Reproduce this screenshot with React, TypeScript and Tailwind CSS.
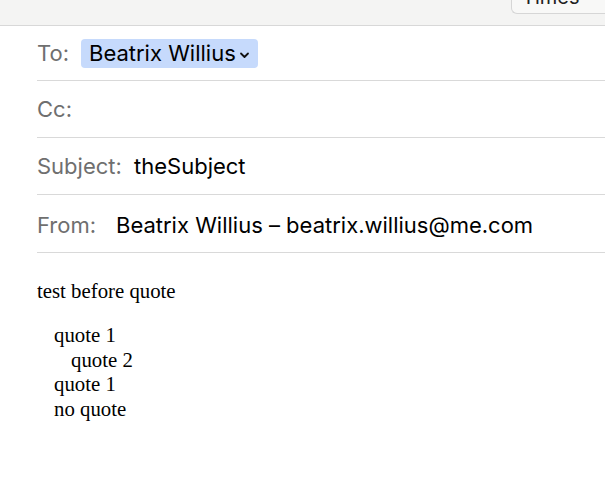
import React from 'react'

const ui = { fontFamily: 'Inter, "Liberation Sans", sans-serif' }
const serif = { fontFamily: '"Liberation Serif", "Times New Roman", serif' }

const Row = ({ label, children, h, labelW, pt }: { label: string; children?: React.ReactNode; h: string; labelW: string; pt: string }) => (
  <div className={`ml-[37px] flex items-center border-b border-[#d9d9d9] ${h} ${pt}`}>
    <span className={`text-[22px] text-[#6f6f6f] ${labelW}`}>{label}</span>
    {children}
  </div>
)

const App = () => {
  return (
    <div className="w-[605px] h-[500px] bg-white overflow-hidden" style={ui}>
      <div className="h-[26px] bg-[#f4f4f3] border-b border-[#d8d8d8] flex justify-end">
        <div className="w-[94px] h-[15px] -mt-px bg-[#f8f8f7] border border-[#d6d6d6] border-r-0 rounded-bl-md overflow-hidden">
          <div className="pl-[10px] -mt-[15px] text-[20px] leading-[24px] text-[#222]">Times</div>
        </div>
      </div>

      <Row label="To:" h="h-[55px]" labelW="w-[44px]" pt="pt-0">
        <div className="flex items-center h-[29px] px-[8px] bg-[#c6dafc] rounded-[4px] mt-px">
          <span className="text-[22px] text-black">Beatrix Willius</span>
          <svg width="11" height="8" viewBox="0 0 11 8" className="ml-[3px] mt-[3px]">
            <path d="M2 2.5 L5.5 6 L9 2.5" fill="none" stroke="#111" strokeWidth="1.8" strokeLinecap="round" strokeLinejoin="round" />
          </svg>
        </div>
      </Row>
      <Row label="Cc:" h="h-[57px]" labelW="w-[44px]" pt="pt-0" />
      <Row label="Subject:" h="h-[57px]" labelW="w-[97px]" pt="pt-0">
        <span className="text-[22px] text-black">theSubject</span>
      </Row>
      <Row label="From:" h="h-[58px]" labelW="w-[79px]" pt="pt-[4px]">
        <span className="text-[22px] text-black">Beatrix Willius – beatrix.willius@me.com</span>
      </Row>

      <div className="pl-[37px] pt-[26px] text-[20.8px] leading-[24.4px] text-black" style={serif}>
        <div>test before quote</div>
        <div className="mt-[20px] pl-[17px]">
          <div>quote 1</div>
          <div className="pl-[17px]">quote 2</div>
          <div>quote 1</div>
          <div>no quote</div>
        </div>
      </div>
    </div>
  )
}

export default App
